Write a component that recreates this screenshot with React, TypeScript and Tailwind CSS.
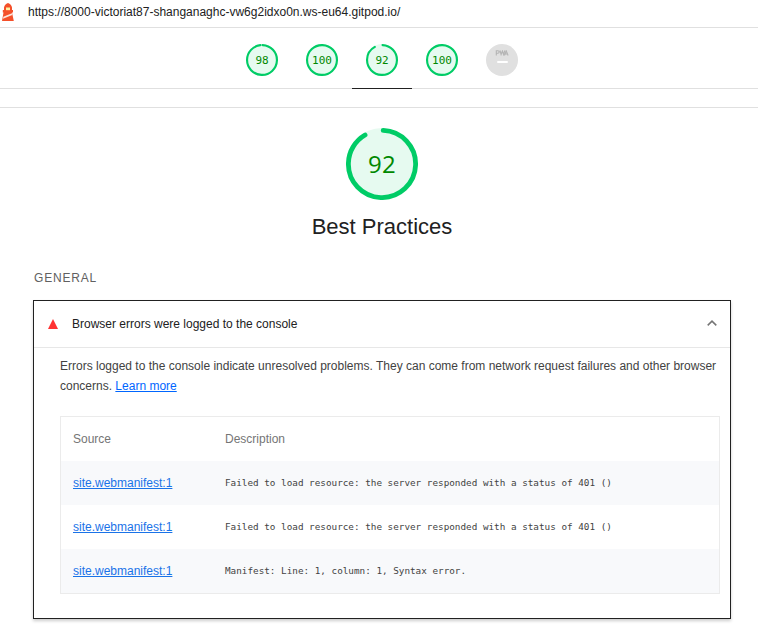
import React from "react";

function Gauge({ score, className }: { score: number; className: string }) {
  const circumference = 2 * Math.PI * 56;
  const arc = score === 100 ? circumference : (score / 100) * circumference - 4;
  return (
    <svg viewBox="0 0 120 120" className={className}>
      <circle cx="60" cy="60" r="60" fill="#e6faf0" />
      <circle
        cx="60"
        cy="60"
        r="56"
        fill="none"
        stroke="#00cc66"
        strokeWidth="8"
        strokeLinecap="round"
        strokeDasharray={`${arc} ${circumference}`}
        transform="rotate(-87.95 60 60)"
      />
    </svg>
  );
}

function MiniGauge({ score, active }: { score: number; active?: boolean }) {
  return (
    <div className={`grid h-[61px] w-[60px] place-items-center border-b pt-1 ${active ? "border-[#212121]" : "border-transparent"}`}>
      <Gauge score={score} className="col-start-1 row-start-1 size-8" />
      <span className="col-start-1 row-start-1 font-['DejaVu_Sans_Mono',monospace] text-[11px] leading-none text-[#008800]">{score}</span>
    </div>
  );
}

function Lighthouse() {
  return (
    <svg viewBox="0 0 16 24" className="h-6 w-4">
      <path d="M4 7.5Q4.600 4 8 3q3.400 1 4 4.500V10h1v2.500h-1L13.800 21H2l1.500-8.500H2.800V10H4z" fill="#f4502a" />
      <path d="M6 7.500h4v2.700H6z" fill="#fff0a0" />
      <path d="m3.300 16.800 8.700-3.600.3 1.700-9.300 3.800z" fill="#fde3da" />
    </svg>
  );
}

const rows = [
  "Failed to load resource: the server responded with a status of 401 ()",
  "Failed to load resource: the server responded with a status of 401 ()",
  "Manifest: Line: 1, column: 1, Syntax error.",
];

export default function App() {
  return (
    <div className="h-[635px] w-[758px] overflow-hidden bg-white font-['Liberation_Sans',Arial,sans-serif] text-[12px] text-[#212121]">
      <header className="flex h-7 items-start border-b border-[#e0e0e0]">
        <Lighthouse />
        <span className="ml-3 whitespace-nowrap leading-6">https://8000-victoriat87-shanganaghc-vw6g2idxo0n.ws-eu64.gitpod.io/</span>
      </header>
      <nav className="flex h-[61px] border-b border-[#e0e0e0] pl-[232px]">
        <MiniGauge score={98} />
        <MiniGauge score={100} />
        <MiniGauge score={92} active />
        <MiniGauge score={100} />
        <div className="grid h-[61px] w-[60px] place-items-center pt-[3px]">
          <div className="flex size-8 flex-col items-center rounded-full bg-[#e0e0e0] pt-[6px]">
            <svg viewBox="0 0 14 6" className="h-[6px] w-[14px]" fill="none" stroke="#b4b4b4" strokeWidth="1.1">
              <path d="M1.3 5.5V.8h1.6q1.3 0 1.3 1.2T2.8 3.3H1.3M5 .5l1.1 4L7.4 1l1.200 3.500L9.800.5M9.500 5.500 11.200.8l1.900 4.700M10.100 4h2.300" />
            </svg>
            <div className="mt-[5px] h-[2px] w-[11px] rounded-full bg-white" />
          </div>
        </div>
      </nav>
      <div className="h-[19px] border-b border-[#e0e0e0]" />
      <section className="flex flex-col items-center pl-[6px] pt-5">
        <div className="grid place-items-center">
          <Gauge score={92} className="col-start-1 row-start-1 size-[72px]" />
          <span className="col-start-1 row-start-1 pb-px font-['Open_Sans',sans-serif] text-[24px] leading-none tracking-[0.4px] text-[#008800]">92</span>
        </div>
        <h1 className="mt-3 text-[22px] leading-[30px]">Best Practices</h1>
      </section>
      <main className="pl-[33px]">
        <h2 className="mt-[26px] h-[32px] pl-px leading-[20px] tracking-[0.8px] text-[#616161]">GENERAL</h2>
        <article className="h-[319px] w-[698px] border border-[#212121] shadow-[0_2px_3px_rgba(0,0,0,0.2)]">
          <div className="flex h-[47px] items-center border-b border-[#e7e7e7] pl-[14px] pr-[13px]">
            <svg viewBox="0 0 10 10" className="size-[10px]">
              <path d="M5 0 10 10H0z" fill="#ff3333" />
            </svg>
            <span className="ml-[14px] flex-1">Browser errors were logged to the console</span>
            <svg viewBox="0 0 10 6" className="mb-[2px] h-[6px] w-[10px]" fill="none" stroke="#757575" strokeWidth="1.5">
              <path d="m.7 5.4L5 1.1l4.3 4.3" />
            </svg>
          </div>
          <p className="ml-[26px] mt-2 h-[60px] whitespace-nowrap leading-[20px] text-[#424242]">
            Errors logged to the console indicate unresolved problems. They can come from network request failures and other browser
            <br />
            concerns. <a className="text-[#0066ff] underline">Learn more</a>
          </p>
          <div className="ml-[26px] w-[660px] border border-[#ebebeb]">
            <div className="flex h-11 items-center pl-3 text-[#757575]">
              <span className="w-[152px]">Source</span>
              <span>Description</span>
            </div>
            {rows.map((message, i) => (
              <div key={i} className="flex h-11 items-center pl-3 odd:bg-white even:bg-[#f8f9fb]">
                <a className="w-[152px] text-[#1a73e8] underline">site.webmanifest:1</a>
                <span className="whitespace-nowrap font-['DejaVu_Sans_Mono',monospace] text-[9.32px] text-[#424242]">{message}</span>
              </div>
            ))}
          </div>
        </article>
      </main>
    </div>
  );
}
